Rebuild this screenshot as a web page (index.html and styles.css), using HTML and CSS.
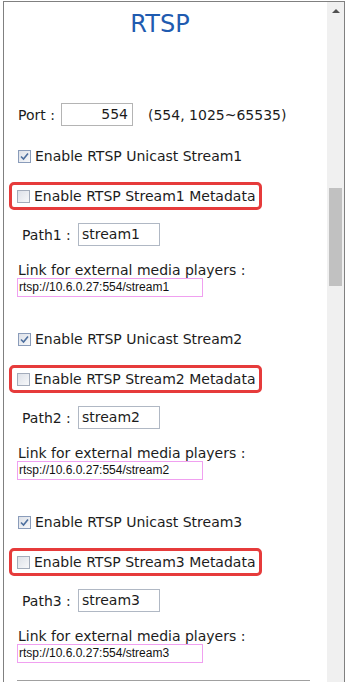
FILE: index.html
```html
<!DOCTYPE html>
<html lang="en">
<head>
<meta charset="utf-8">
<title>RTSP</title>
<link rel="stylesheet" href="styles.css">
</head>
<body>
<div class="frame">
  <div class="content">
    <h1 class="title">RTSP</h1>
    <div class="port-row">
      <span class="port-label">Port :</span>
      <span class="port-field">554</span>
      <span class="range">(554, 1025~65535)</span>
    </div>

    <section class="stream">
      <div class="check-row">
        <span class="cb checked"><svg viewBox="0 0 11 11" width="11" height="11"><path d="M2 5.5 L4.5 8 L9 2.5" fill="none" stroke="#4d6f9e" stroke-width="1.6"/></svg></span>
        <span>Enable RTSP Unicast Stream1</span>
      </div>
      <div class="meta-row">
        <span class="cb"></span>
        <span>Enable RTSP Stream1 Metadata</span>
      </div>
      <div class="path-row">
        <span class="path-label">Path1 :</span>
        <span class="path-field">stream1</span>
      </div>
      <div class="link-label">Link for external media players :</div>
      <div class="link-field">rtsp://10.6.0.27:554/stream1</div>
    </section>

    <section class="stream">
      <div class="check-row">
        <span class="cb checked"><svg viewBox="0 0 11 11" width="11" height="11"><path d="M2 5.5 L4.5 8 L9 2.5" fill="none" stroke="#4d6f9e" stroke-width="1.6"/></svg></span>
        <span>Enable RTSP Unicast Stream2</span>
      </div>
      <div class="meta-row">
        <span class="cb"></span>
        <span>Enable RTSP Stream2 Metadata</span>
      </div>
      <div class="path-row">
        <span class="path-label">Path2 :</span>
        <span class="path-field">stream2</span>
      </div>
      <div class="link-label">Link for external media players :</div>
      <div class="link-field">rtsp://10.6.0.27:554/stream2</div>
    </section>

    <section class="stream">
      <div class="check-row">
        <span class="cb checked"><svg viewBox="0 0 11 11" width="11" height="11"><path d="M2 5.5 L4.5 8 L9 2.5" fill="none" stroke="#4d6f9e" stroke-width="1.6"/></svg></span>
        <span>Enable RTSP Unicast Stream3</span>
      </div>
      <div class="meta-row">
        <span class="cb"></span>
        <span>Enable RTSP Stream3 Metadata</span>
      </div>
      <div class="path-row">
        <span class="path-label">Path3 :</span>
        <span class="path-field">stream3</span>
      </div>
      <div class="link-label">Link for external media players :</div>
      <div class="link-field">rtsp://10.6.0.27:554/stream3</div>
    </section>

    <hr class="divider">
  </div>
  <div class="scrollbar">
    <span class="arrow"></span>
    <span class="thumb"></span>
  </div>
</div>
</body>
</html>
```

FILE: styles.css
```css
html, body {
  margin: 0;
  height: 682px;
  overflow: hidden;
  background: #fff;
}
body {
  font-family: "DejaVu Sans", Verdana, sans-serif;
  font-size: 14px;
  color: #1c1c1c;
}
.frame {
  margin: 1px 0 0 3px;
  width: 342px;
  height: 681px;
  box-sizing: border-box;
  border: 1px solid #808080;
  border-bottom: 0;
  display: flex;
  overflow: hidden;
}
.content {
  width: 323px;
  flex: none;
}
.scrollbar {
  width: 17px;
  flex: none;
  background: #f0f0f0;
  display: flex;
  flex-direction: column;
  align-items: center;
}
.arrow {
  margin-top: 7px;
  width: 0;
  height: 0;
  border-left: 4px solid transparent;
  border-right: 4px solid transparent;
  border-bottom: 4px solid #505050;
}
.thumb {
  margin-top: 175px;
  width: 13px;
  height: 98px;
  background: #c1c1c1;
}
.title {
  margin: 0;
  padding: 4px 11px 0 0;
  height: 36px;
  line-height: 36px;
  font-family: "DejaVu Sans", Verdana, sans-serif;
  font-weight: normal;
  font-size: 24px;
  color: #1f5bb0;
  text-align: center;
}
.port-row {
  margin-top: 61px;
  height: 23px;
  display: flex;
  align-items: center;
  padding-left: 14px;
}
.port-label {
  width: 43px;
  flex: none;
}
.port-field {
  width: 72px;
  height: 23px;
  box-sizing: border-box;
  border: 1px solid #b4b4b4;
  text-align: right;
  padding-right: 4px;
  line-height: 21px;
}
.range {
  margin-left: 15px;
}
.stream {
  margin-top: 32px;
}
.stream:first-of-type {
  margin-top: 20px;
}
.check-row {
  height: 20px;
  display: flex;
  align-items: center;
  padding-left: 14px;
}
.cb {
  width: 13px;
  height: 13px;
  flex: none;
  box-sizing: border-box;
  border: 1px solid #a3acbb;
  background: linear-gradient(135deg, #dde1e8, #f7f8fa);
  margin-right: 4px;
  display: flex;
  align-items: center;
  justify-content: center;
}
.cb.checked {
  border-color: #8a9cba;
}
.meta-row {
  margin: 16px 0 0 5px;
  width: max-content;
  height: 28px;
  box-sizing: border-box;
  border: 3px solid #e63b3b;
  border-radius: 5px;
  display: flex;
  align-items: center;
  padding: 0 4px 0 5px;
}
.path-row {
  margin-top: 13px;
  height: 23px;
  display: flex;
  align-items: center;
  padding-left: 18px;
}
.path-label {
  width: 56px;
  flex: none;
}
.path-field {
  width: 82px;
  height: 23px;
  box-sizing: border-box;
  border: 1px solid #b0b8c4;
  padding-left: 3px;
  line-height: 21px;
  font-size: 14px;
}
.link-label {
  margin-top: 16px;
  padding-left: 14px;
  height: 16px;
  line-height: 16px;
}
.link-field {
  margin-left: 13px;
  width: 186px;
  height: 19px;
  box-sizing: border-box;
  border: 1px solid #f0a0f0;
  padding-left: 1px;
  font-family: "Liberation Sans", Arial, sans-serif;
  font-size: 12px;
  line-height: 17px;
  color: #111;
}
.divider {
  margin: 17px 0 0 13px;
  width: 293px;
  height: 0;
  border: 0;
  border-top: 1px solid #a0a0a0;
}
```
